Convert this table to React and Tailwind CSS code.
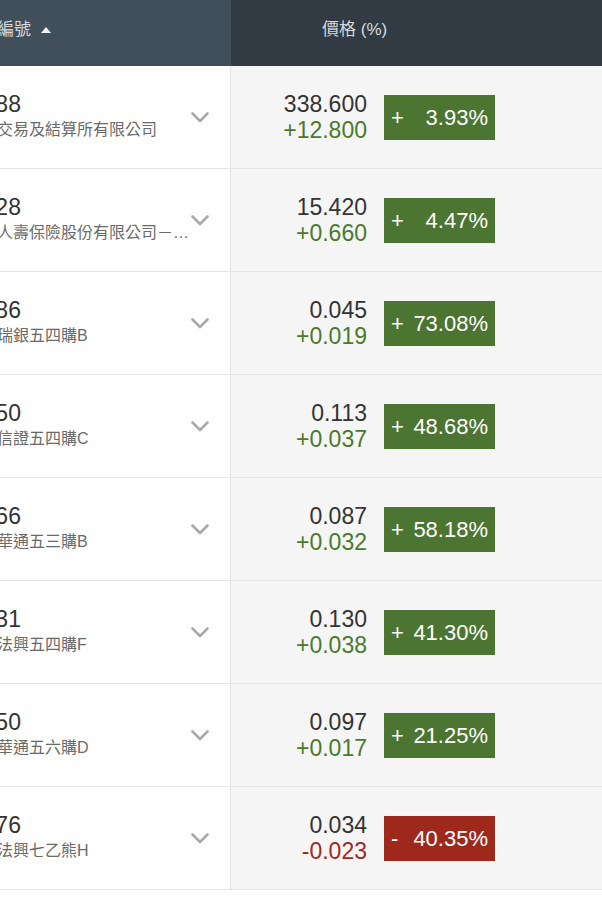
import React from 'react';

const rows = [
    { code: '00388', name: '香港交易及結算所有限公司', price: '338.600', change: '+12.800', pct: '3.93%', up: true },
    { code: '02628', name: '中國人壽保險股份有限公司－H股', price: '15.420', change: '+0.660', pct: '4.47%', up: true },
    { code: '24186', name: '騰訊瑞銀五四購B', price: '0.045', change: '+0.019', pct: '73.08%', up: true },
    { code: '23450', name: '騰訊信證五四購C', price: '0.113', change: '+0.037', pct: '48.68%', up: true },
    { code: '22666', name: '騰訊華通五三購B', price: '0.087', change: '+0.032', pct: '58.18%', up: true },
    { code: '24031', name: '騰訊法興五四購F', price: '0.130', change: '+0.038', pct: '41.30%', up: true },
    { code: '25150', name: '騰訊華通五六購D', price: '0.097', change: '+0.017', pct: '21.25%', up: true },
    { code: '62176', name: '恒指法興七乙熊H', price: '0.034', change: '-0.023', pct: '40.35%', up: false },
];

const font = { fontFamily: '"Liberation Sans", "Noto Sans CJK TC", sans-serif' };

const Chevron = () => (
    <svg width="18" height="11" viewBox="0 0 18 11" fill="none">
        <path d="M1.5 1.5 L9 9 L16.5 1.5" stroke="#a9a9a9" strokeWidth="2.6" strokeLinecap="round" strokeLinejoin="round" />
    </svg>
);

const Row = ({ row }) => (
    <div className="flex h-[103px] border-b border-[#e6e6e6]">
        {/* left: code + name, scrolled so the start is hidden */}
        <div className="w-[231px] shrink-0 bg-white border-r border-[#e3e3e3] overflow-hidden flex items-center">
            <div className="ml-[-35px] w-[225px] shrink-0 flex flex-col">
                <span className="ml-[-8px] text-[23px] leading-[26px] text-[#333]">{row.code}</span>
                <span className="text-[16px] leading-[26px] text-[#6a6a6a] truncate">{row.name}</span>
            </div>
            <div className="ml-[1px] shrink-0 pt-[1px]">
                <Chevron />
            </div>
        </div>
        {/* right: price + change badge */}
        <div className="flex-1 bg-[#f5f5f5] flex items-center">
            <div className="w-[136px] flex flex-col items-end text-[23px] leading-[26px]">
                <span className="text-[#333]">{row.price}</span>
                <span className={row.up ? 'text-[#4a7a2c]' : 'text-[#a3281d]'}>{row.change}</span>
            </div>
            <div
                className={`ml-[17px] w-[111px] h-[45px] flex items-center justify-between px-[7px] text-white text-[22px] ${
                    row.up ? 'bg-[#4b7531]' : 'bg-[#9f281d]'
                }`}
            >
                <span>{row.up ? '+' : '-'}</span>
                <span>{row.pct}</span>
            </div>
        </div>
    </div>
);

export default function App() {
    return (
        <div className="w-[602px] h-[900px] bg-white overflow-hidden" style={font}>
            <div className="flex h-[66px]">
                <div className="w-[231px] shrink-0 bg-[#414f5b] overflow-hidden flex items-center pb-[6px]">
                    <div className="ml-[-37px] flex items-center text-[17px] text-[#d5dade]">
                        <span>股票編號</span>
                        <svg className="ml-[10px]" width="10" height="6" viewBox="0 0 10 6">
                            <path d="M0 6 L5 0 L10 6 Z" fill="#f2f4f5" />
                        </svg>
                    </div>
                </div>
                <div className="flex-1 bg-[#323a43] flex items-center pl-[91px] pb-[6px]">
                    <span className="text-[17px] text-[#d5dade]">價格 (%)</span>
                </div>
            </div>
            {rows.map((row) => (
                <Row key={row.code} row={row} />
            ))}
        </div>
    );
}
